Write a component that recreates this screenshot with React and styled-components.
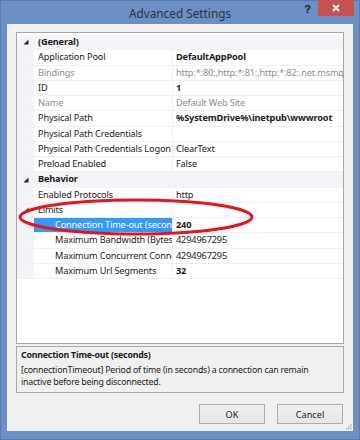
import React from 'react'
import styled, { createGlobalStyle } from 'styled-components'

const GlobalStyle = createGlobalStyle`
  body {
    margin: 0;
    font-family: "Noto Sans", "Open Sans", sans-serif;
  }
`

const Window = styled.div`
  width: 360px;
  height: 440px;
  background: #6c8fc6;
  box-sizing: border-box;
  border: 1px solid #5a7bb0;
  display: flex;
  flex-direction: column;
`

const TitleBar = styled.div`
  height: 23px;
  display: grid;
  grid-template-columns: 1fr auto 1fr;
  align-items: start;
`

const Title = styled.div`
  grid-column: 2;
  font-size: 11.8px;
  line-height: 25px;
  color: #2a3340;
`

const Controls = styled.div`
  justify-self: end;
  display: flex;
  align-items: flex-start;
  margin-right: 5px;
`

const Help = styled.div`
  font-family: "Liberation Sans", sans-serif;
  font-weight: bold;
  font-size: 11px;
  line-height: 16px;
  color: #1a1a1a;
  margin-right: 7px;
`

const Close = styled.div`
  width: 36px;
  height: 16px;
  margin-top: -1px;
  background: #c75050;
  display: flex;
  align-items: center;
  justify-content: center;
`

const Client = styled.div`
  flex: 1;
  margin: 0 6px 9px;
  background: #f0f0f0;
  padding: 8px 9px 7px;
  display: flex;
  flex-direction: column;
`

const Grid = styled.div`
  position: relative;
  height: 312px;
  box-sizing: border-box;
  border: 1px solid #a6a6a6;
  background: #fff;
  padding-top: 2px;
  font-size: 9.2px;
  letter-spacing: -0.15px;
  overflow: hidden;
`

const Row = styled.div`
  height: 15.27px;
  box-sizing: border-box;
  display: grid;
  grid-template-columns: 17px 139px 1fr;
  border-bottom: 1px solid #eef0f3;
  background: ${p => (p.$category ? '#f2f4f7' : '#fff')};
`

const Strip = styled.div`
  background: #f2f4f7;
  display: flex;
  align-items: center;
  justify-content: center;
`

const Label = styled.div`
  padding-left: ${p => (p.$nested ? 21 : 4)}px;
  line-height: 14.5px;
  white-space: nowrap;
  overflow: hidden;
  border-right: ${p => (p.$category ? 'none' : '1px solid #eef0f3')};
  font-weight: ${p => (p.$category ? 'bold' : 'normal')};
  color: ${p => (p.$selected ? '#fff' : p.$muted ? '#8c8c8c' : '#1a1a1a')};
  background: ${p => (p.$selected ? '#3399ff' : 'transparent')};
`

const Value = styled.div`
  padding-left: 3px;
  line-height: 14.5px;
  white-space: nowrap;
  overflow: hidden;
  font-weight: ${p => (p.$bold ? 'bold' : 'normal')};
  color: ${p => (p.$muted ? '#8c8c8c' : '#1a1a1a')};
`

const Ring = styled.svg`
  position: absolute;
  left: 1px;
  top: 164px;
  pointer-events: none;
`

const Desc = styled.div`
  margin-top: 2px;
  height: 47px;
  box-sizing: border-box;
  border: 1px solid #a9a9a9;
  padding: 2px 4px;
  font-size: 8.8px;
  letter-spacing: -0.2px;
  line-height: 12.5px;
  color: #1a1a1a;
`

const DescTitle = styled.div`
  font-weight: bold;
  margin-bottom: 2px;
`

const Buttons = styled.div`
  margin-top: 11px;
  display: flex;
  justify-content: flex-end;
  gap: 12px;
  padding-right: 1px;
`

const Button = styled.div`
  width: 66px;
  height: 20px;
  box-sizing: border-box;
  border: 1px solid #acacac;
  background: linear-gradient(#f0f0f0, #e5e5e5);
  font-size: 9.2px;
  display: flex;
  align-items: center;
  justify-content: center;
  color: #1a1a1a;
`

const Footer = styled.div`
  position: relative;
  flex: 1;
`

const Grip = styled.svg`
  position: absolute;
  right: -8px;
  bottom: -6px;
`

const Expander = () => (
  <svg width="6" height="6" viewBox="0 0 6 6">
    <polygon points="5.5,0.5 5.5,5.5 0.5,5.5" fill="#262626" />
  </svg>
)

const rows = [
  { cat: true, label: '(General)' },
  { label: 'Application Pool', value: 'DefaultAppPool', bold: true },
  { label: 'Bindings', value: 'http:*:80:,http:*:81:,http:*:82:,net.msmq:localhost', muted: true },
  { label: 'ID', value: '1', bold: true },
  { label: 'Name', value: 'Default Web Site', muted: true },
  { label: 'Physical Path', value: '%SystemDrive%\\inetpub\\wwwroot', bold: true },
  { label: 'Physical Path Credentials', value: '' },
  { label: 'Physical Path Credentials Logon Type', value: 'ClearText' },
  { label: 'Preload Enabled', value: 'False' },
  { cat: true, label: 'Behavior' },
  { label: 'Enabled Protocols', value: 'http' },
  { label: 'Limits', value: '', expander: true },
  { label: 'Connection Time-out (seconds)', value: '240', bold: true, nested: true, selected: true },
  { label: 'Maximum Bandwidth (Bytes/second)', value: '4294967295', nested: true },
  { label: 'Maximum Concurrent Connections', value: '4294967295', nested: true },
  { label: 'Maximum Url Segments', value: '32', bold: true, nested: true },
]

export default function App() {
  return (
    <>
      <GlobalStyle />
      <Window>
        <TitleBar>
          <Title>Advanced Settings</Title>
          <Controls>
            <Help>?</Help>
            <Close>
              <svg width="8" height="8" viewBox="0 0 8 8">
                <path d="M1 1L7 7M7 1L1 7" stroke="#fff" strokeWidth="1.8" />
              </svg>
            </Close>
          </Controls>
        </TitleBar>
        <Client>
          <Grid>
            {rows.map((r, i) =>
              r.cat ? (
                <Row key={i} $category>
                  <Strip>
                    <Expander />
                  </Strip>
                  <Label $category>{r.label}</Label>
                  <Value />
                </Row>
              ) : (
                <Row key={i}>
                  <Strip>{r.expander && <Expander />}</Strip>
                  <Label $nested={r.nested} $selected={r.selected} $muted={r.muted}>
                    {r.label}
                  </Label>
                  <Value $bold={r.bold} $muted={r.muted}>
                    {r.value}
                  </Value>
                </Row>
              )
            )}
            <Ring width="240" height="40" viewBox="0 0 240 40">
              <ellipse cx="118" cy="20" rx="116" ry="17" fill="none" stroke="#e8141b" strokeWidth="3" />
            </Ring>
          </Grid>
          <Desc>
            <DescTitle>Connection Time-out (seconds)</DescTitle>
            [connectionTimeout] Period of time (in seconds) a connection can remain inactive before being
            disconnected.
          </Desc>
          <Footer>
            <Buttons>
              <Button>OK</Button>
              <Button>Cancel</Button>
            </Buttons>
            <Grip width="6" height="6" viewBox="0 0 6 6">
              <g fill="#b8b8b8">
                <rect x="4" y="0" width="1.5" height="1.5" />
                <rect x="2" y="2" width="1.5" height="1.5" />
                <rect x="4" y="2" width="1.5" height="1.5" />
                <rect x="0" y="4" width="1.5" height="1.5" />
                <rect x="2" y="4" width="1.5" height="1.5" />
                <rect x="4" y="4" width="1.5" height="1.5" />
              </g>
            </Grip>
          </Footer>
        </Client>
      </Window>
    </>
  )
}
